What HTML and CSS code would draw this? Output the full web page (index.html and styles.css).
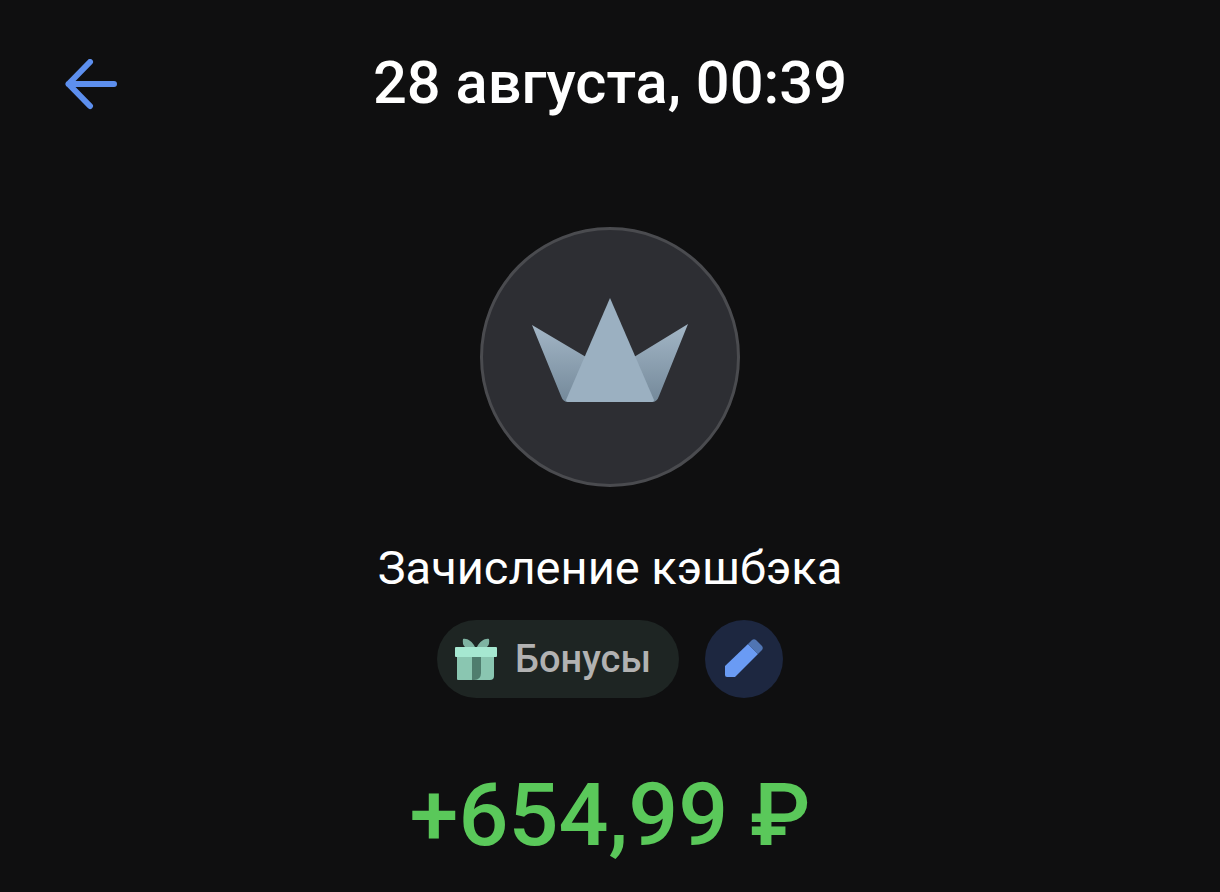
FILE: index.html
```html
<!DOCTYPE html>
<html lang="ru">
<head>
    <meta charset="UTF-8">
    <meta name="viewport" content="width=device-width, initial-scale=1.0">
    <title>Операция</title>
    <link rel="stylesheet" href="styles.css">
</head>
<body>
    <div class="screen">
        <!-- Header -->
        <div class="header">
            <svg class="back-icon" width="54" height="54" viewBox="0 0 54 54" aria-hidden="true">
                <path d="M25 3 L3.500 25 L25 47 M3.500 25 H49" fill="none" stroke="#5d8fee" stroke-width="6" stroke-linecap="round" stroke-linejoin="round"/>
            </svg>
            <h1 class="title">28 августа, 00:39</h1>
        </div>

        <!-- Operation logo -->
        <div class="logo-circle">
            <svg class="crown" width="160" height="110" viewBox="0 0 160 110" aria-hidden="true">
                <defs>
                    <linearGradient id="wingGrad" x1="0" y1="0" x2="0" y2="1">
                        <stop offset="0" stop-color="#a3b6c6"/>
                        <stop offset="1" stop-color="#74899a"/>
                    </linearGradient>
                </defs>
                <path d="M2 29 L56 61 L50 106 H38 Q33 106 31 100 Z" fill="url(#wingGrad)"/>
                <path d="M158 28 L104 61 L110 106 H122 Q127 106 129 100 Z" fill="url(#wingGrad)"/>
                <path d="M80 2 L124 104 Q124 106 121 106 H39 Q36 106 36 104 Z" fill="#9bb0c1"/>
            </svg>
        </div>

        <div class="name">Зачисление кэшбэка</div>

        <!-- Category -->
        <div class="tags">
            <div class="category">
                <svg class="gift" width="42" height="42" viewBox="0 0 42 42" aria-hidden="true">
                    <path d="M20 9 C17 3 12 0 8 1 Q7 6 10 9 Z M22 9 C25 3 30 0 34 1 Q35 6 32 9 Z" fill="#7fb3a2"/>
                    <path d="M2 19 H39 V38 Q39 42 35 42 H3 Q2 42 2 41 Z" fill="#8ac6b1"/>
                    <rect x="0" y="9" width="42" height="10" rx="1" fill="#a6e8d1"/>
                    <path d="M17 19 H26 V35 Q26 42 19 42 H17 Z" fill="#4f7d6e"/>
                </svg>
                <span class="category-label">Бонусы</span>
            </div>
            <div class="edit-btn">
                <svg width="40" height="40" viewBox="0 0 40 40" aria-hidden="true">
                    <path d="M1 27 L24 5 L34 15 L11 38 H3 Q1 38 1 36 Z" fill="#6a9bf4"/>
                    <path d="M24 5 L28 1 Q30 -0.5 32 1 L38 7 Q39.5 9 38 11 L34 15 Z" fill="#5075b3"/>
                </svg>
            </div>
        </div>

        <div class="amount">+654,99 ₽</div>
    </div>
</body>
</html>
```

FILE: styles.css
```css
/* General Styles */
body {
    margin: 0;
    background: #0f0f10;
    font-family: 'Roboto', 'Liberation Sans', sans-serif;
    color: #fff;
}
.screen {
    height: 892px;
    overflow: hidden;
    display: flex;
    flex-direction: column;
    align-items: center;
}

/* Header */
.header {
    width: 100%;
    box-sizing: border-box;
    display: grid;
    grid-template-columns: 1fr auto 1fr;
    align-items: center;
    padding: 48px 65px 0;
}
.back-icon {
    justify-self: start;
    margin-top: 6px;
}
.title {
    margin: 0;
    font-size: 59.6px;
    line-height: 70px;
    font-weight: 500;
    white-space: nowrap;
}

/* Logo */
.logo-circle {
    width: 260px;
    height: 260px;
    box-sizing: border-box;
    margin-top: 109px;
    padding-bottom: 12px;
    border-radius: 50%;
    border: 3px solid #4a4b4f;
    background: #2d2e33;
    display: flex;
    align-items: center;
    justify-content: center;
}

/* Name and category */
.name {
    margin-top: 54px;
    font-size: 47px;
    line-height: 54px;
    white-space: nowrap;
}
.tags {
    display: flex;
    gap: 26px;
    margin-top: 25px;
}
.category {
    height: 78px;
    box-sizing: border-box;
    padding: 0 28px 0 18px;
    border-radius: 39px;
    background: #1e2523;
    display: flex;
    align-items: center;
    gap: 18px;
}
.category-label {
    font-size: 38px;
    font-weight: 500;
    color: #b2b2b2;
}
.edit-btn {
    width: 78px;
    height: 78px;
    border-radius: 50%;
    background: #1d2740;
    display: flex;
    align-items: center;
    justify-content: center;
}

/* Amount */
.amount {
    margin-top: 67px;
    font-size: 88px;
    line-height: 100px;
    font-weight: 500;
    color: #5ac85a;
    white-space: nowrap;
}
```
